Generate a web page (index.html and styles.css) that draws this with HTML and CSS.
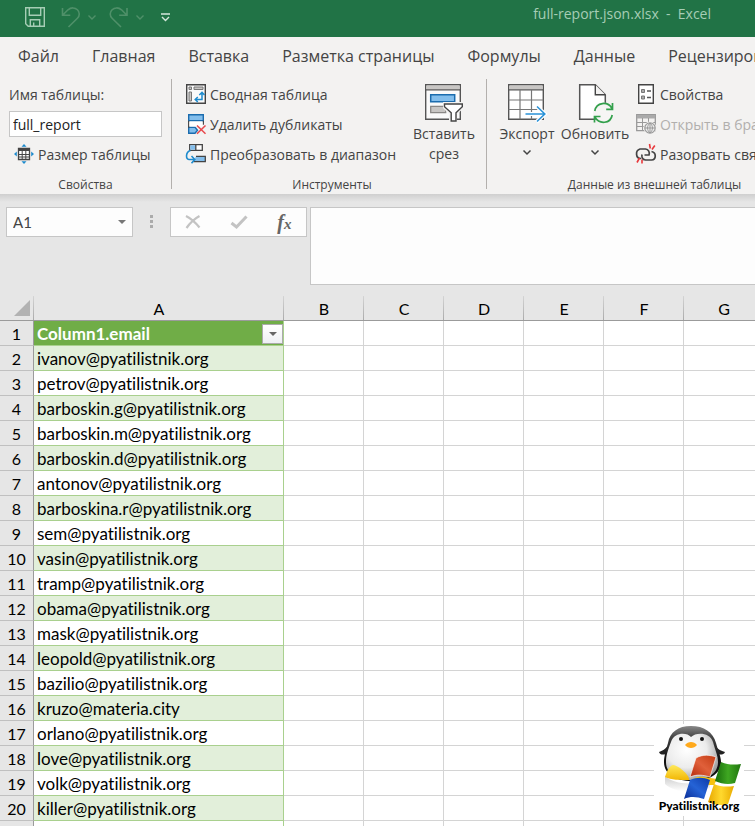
FILE: index.html
```html
<!DOCTYPE html>
<html lang="ru">
<head>
    <meta charset="UTF-8">
    <meta name="viewport" content="width=device-width, initial-scale=1.0">
    <title>full-report.json.xlsx - Excel</title>
    <link rel="stylesheet" href="styles.css">
</head>
<body>
    <header class="titlebar">
        <div class="quick-access">
            <button type="button" class="quick-btn" aria-label="Сохранить">
                <svg width="20" height="20" viewBox="0 0 20 20" fill="none" stroke="#a6cdb5" stroke-width="1.4"><path d="M.7.7h18.6v18.6H3.2L.7 16.8z"/><path d="M4.3.7v7.6h11.4V.7M5.3 19v-6.3h9.4V19M8.7 19v-3.4"/></svg>
            </button>
            <button type="button" class="quick-btn undo" aria-label="Отменить">
                <svg width="20" height="21" viewBox="0 0 20 21" fill="none" stroke="#4f9069" stroke-width="1.6"><path d="M1.5 1v7.2h7.8M1.8 8L7 2.8c3-2.6 7-2.4 9.4 0 2.5 2.4 2.5 6 0 8.5L7.5 20"/></svg>
            </button>
            <svg class="quick-arrow" width="8" height="5" viewBox="0 0 8 5" fill="none" stroke="#4f9069" stroke-width="1.4"><path d="M.5.5L4 4 7.5.5"/></svg>
            <button type="button" class="quick-btn redo" aria-label="Повторить">
                <svg width="20" height="21" viewBox="0 0 20 21" fill="none" stroke="#4f9069" stroke-width="1.6"><path d="M18 1v7.2h-7.8M17.7 8L12.5 2.8c-3-2.6-7-2.4-9.4 0-2.5 2.4-2.5 6 0 8.5L12 20"/></svg>
            </button>
            <svg class="quick-arrow" width="8" height="5" viewBox="0 0 8 5" fill="none" stroke="#4f9069" stroke-width="1.4"><path d="M.5.5L4 4 7.5.5"/></svg>
            <button type="button" class="quick-btn more" aria-label="Настройка панели быстрого доступа">
                <svg width="9" height="9" viewBox="0 0 9 9" fill="none" stroke="#d5e8dc" stroke-width="1.4"><path d="M0 1h9M1 4l3.5 3.5L8 4"/></svg>
            </button>
        </div>
        <div class="doc-title">full-report.json.xlsx&nbsp; -&nbsp; Excel</div>
    </header>

    <nav class="tabs">
        <a href="#" class="tab">Файл</a>
        <a href="#" class="tab">Главная</a>
        <a href="#" class="tab">Вставка</a>
        <a href="#" class="tab">Разметка страницы</a>
        <a href="#" class="tab">Формулы</a>
        <a href="#" class="tab">Данные</a>
        <a href="#" class="tab">Рецензирование</a>
    </nav>

    <div class="ribbon">
        <section class="group group-props">
            <div class="group-body">
                <div class="stack">
                    <label for="table-name" class="cmd-label">Имя таблицы:</label>
                    <input type="text" id="table-name" class="table-name" value="full_report">
                    <button type="button" class="cmd resize">
                        <svg width="20" height="20" viewBox="0 0 20 20"><path d="M4.5 4.5h11v11h-11z" fill="#fff" stroke="#444" stroke-width="1.3"/><path d="M4 4h12v3H4z" fill="#444"/><path d="M4.5 10.5h11M4.5 13h11M8.2 7v8.5M11.8 7v8.5" stroke="#444"/><path d="M10 0l2.5 2.8h-5zM10 20l2.5-2.8h-5zM0 10l2.8-2.5v5zM20 10l-2.8-2.5v5z" fill="#1e8bcd"/></svg>
                        Размер таблицы
                    </button>
                </div>
            </div>
            <div class="group-name">Свойства</div>
        </section>

        <section class="group group-tools">
            <div class="group-body">
                <div class="stack">
                    <button type="button" class="cmd">
                        <svg width="20" height="20" viewBox="0 0 20 20"><path d="M.7.7h18.6v18.6H.7z" fill="#fafafa" stroke="#444" stroke-width="1.4"/><path d="M3 3h2.5v2.5H3zM8 3h9v2.5H8zM3 8h2.5v9H3z" fill="#c8c6c4" stroke="#777"/><path d="M9.5 15.5h6.5V9M11.8 13l-2.6 2.5 2.6 2.5M13.3 11L16 8.3l2.5 2.7" fill="none" stroke="#1e8bcd" stroke-width="1.5"/></svg>
                        Сводная таблица
                    </button>
                    <button type="button" class="cmd">
                        <svg width="20" height="20" viewBox="0 0 20 20"><path d="M2.7.7h14.6v6H2.7zM2.7 13.3h6.3l2.5 3-2.5 3H2.7z" fill="#83beec" stroke="#1b6cae" stroke-width="1.4"/><path d="M2.7 6.7v7M17.3 6.7v4" stroke="#444" stroke-width="1.3"/><path d="M3.4 7.4h13.2v5.2H3.4z" fill="#fff"/><path d="M11 11.5l8.5 8.2M19.5 11.5L11 19.7" stroke="#e8484b" stroke-width="1.5"/></svg>
                        Удалить дубликаты
                    </button>
                    <button type="button" class="cmd">
                        <svg width="20" height="20" viewBox="0 0 20 20"><path d="M3.7.7h12.6v5.6H3.7z" fill="#fff" stroke="#444" stroke-width="1.3"/><path d="M4.3 1.3h5v4.4h-5z" fill="#83beec"/><path d="M9.8.7v5.6" stroke="#444" stroke-width="1.3"/><path d="M10 12.3h9.3v5.4H7.5" fill="#83beec" stroke="#444" stroke-width="1.3"/><path d="M4.5 6.5C-.5 8-.5 15 3 15.5h5.5M5.5 12l3.3 3.5-3.3 3.8" fill="none" stroke="#1e8bcd" stroke-width="1.6"/></svg>
                        Преобразовать в диапазон
                    </button>
                </div>
                <button type="button" class="big-cmd slicer">
                    <svg width="38" height="38" viewBox="0 0 38 38"><path d="M.7.7h34.6v34.6H.7z" fill="#fafafa" stroke="#555" stroke-width="1.4"/><path d="M1.4 1.4h33.2v4H1.4z" fill="#c8c6c4"/><path d="M.7 5.8h34.6" stroke="#555" stroke-width="1.3"/><path d="M5.7 10.7h24v7h-24z" fill="#83beec" stroke="#1b6cae" stroke-width="1.5"/><path d="M5.7 22.3h15v6.4h-15z" fill="#c8c6c4" stroke="#8a8886" stroke-width="1.3"/><path d="M18 18h21v6l-7 6v8h-8v-8l-6-6z" fill="#f3f2f1"/><path d="M19.5 20h17.8v2.8l-6.3 6V37h-4.8v-8.2l-6.7-6z" fill="#fff" stroke="#444" stroke-width="1.4"/></svg>
                    <span>Вставить<br>срез</span>
                </button>
            </div>
            <div class="group-name">Инструменты</div>
        </section>

        <section class="group group-data">
            <div class="group-body">
                <button type="button" class="big-cmd">
                    <svg width="38" height="38" viewBox="0 0 38 38"><path d="M.7.7h34.6v34.6H.7z" fill="#fff" stroke="#555" stroke-width="1.4"/><path d="M1.4 1.4h33.2v4H1.4z" fill="#c8c6c4"/><path d="M.7 5.8h34.6" stroke="#555" stroke-width="1.3"/><path d="M.7 16h34.6M.7 25.5h34.6M12 6v29.3M23.5 6v29.3" stroke="#777" stroke-width="1.2"/><path d="M17.5 30H37M28.5 22l8.3 8-8.3 8" fill="none" stroke="#fff" stroke-width="4"/><path d="M17.5 30H37M29 22.5l7.8 7.5-7.8 7.5" fill="none" stroke="#2b93d8" stroke-width="1.6"/></svg>
                    <span>Экспорт</span>
                    <svg class="chevron" width="8" height="5" viewBox="0 0 8 5" fill="none" stroke="#444" stroke-width="1.5"><path d="M.5.5L4 4 7.5.5"/></svg>
                </button>
                <button type="button" class="big-cmd">
                    <svg width="38" height="38" viewBox="0 0 38 38"><path d="M3.7.7h15.6l10 10v24.6H3.7z" fill="#fff" stroke="#555" stroke-width="1.5"/><path d="M19.3.7v10h10" fill="#f3f2f1" stroke="#444" stroke-width="1.4"/><circle cx="27.5" cy="29" r="10.5" fill="#f6f5f4"/><path d="M18.8 27c1.5-9 13-10 17.2-2.5M36.5 19v6.3h-6.3M36.2 31c-1.5 9-13 9.500-17.200 2.300M18.500 38.500v-6h6" fill="none" stroke="#33a04c" stroke-width="1.7"/></svg>
                    <span>Обновить</span>
                    <svg class="chevron" width="8" height="5" viewBox="0 0 8 5" fill="none" stroke="#444" stroke-width="1.5"><path d="M.5.5L4 4 7.5.5"/></svg>
                </button>
                <div class="stack stack-data">
                    <button type="button" class="cmd">
                        <svg width="20" height="20" viewBox="0 0 20 20"><path d="M2.7.7h14.6v18.6H2.7z" fill="#fff" stroke="#444" stroke-width="1.4"/><path d="M5.5 5.5h3v3h-3zM5.5 12h3v3h-3z" fill="#aaa" stroke="#777"/><path d="M11 7h4M11 13.5h4" stroke="#555" stroke-width="1.3"/></svg>
                        Свойства
                    </button>
                    <button type="button" class="cmd" disabled>
                        <svg width="20" height="20" viewBox="0 0 20 20"><path d="M.7.7h18.6v16H.7z" fill="#f3f2f1" stroke="#999" stroke-width="1.3"/><path d="M1 1h18v3.5H1z" fill="#aaa"/><path d="M1 8.5h18M1 12.5h9M6.5 4v12.5M12.5 4v5" stroke="#999"/><circle cx="14" cy="14" r="6.5" fill="#f3f2f1"/><circle cx="14" cy="14" r="5.2" fill="#eee" stroke="#999" stroke-width="1.2"/><path d="M9 14h10M14 9v10M14 9c-3.3 3-3.3 7 0 10M14 9c3.3 3 3.3 7 0 10" fill="none" stroke="#999"/></svg>
                        Открыть в браузере
                    </button>
                    <button type="button" class="cmd">
                        <svg width="20" height="20" viewBox="0 0 20 20" fill="none"><path d="M5 14.5C-.5 14.5-1 6.500 4 5h5.500c3 .5 4.500 3 3.500 6H8.500M15.500 7.500c5 1 5 8 0 8.500H9.500C6 15.500 5.500 13 6 10.500" stroke="#444" stroke-width="1.7"/><path d="M13.5 0l.8 4.5M18.8 1.5L16 5.5M1 18.5l2.5-4.5M6 19.5v-4" stroke="#e8383b" stroke-width="1.6"/></svg>
                        Разорвать связь
                    </button>
                </div>
            </div>
            <div class="group-name">Данные из внешней таблицы</div>
        </section>
    </div>

    <div class="formula-row">
        <div class="name-box">
            <input type="text" class="name-input" aria-label="Имя ячейки" value="A1">
            <button type="button" class="name-arrow" aria-label="Список имён">
                <svg width="8" height="4" viewBox="0 0 8 4"><path d="M0 0h8L4 4z" fill="#777"/></svg>
            </button>
        </div>
        <svg class="grip" width="3" height="13" viewBox="0 0 3 13"><path d="M0 0h3v3H0zM0 5h3v3H0zM0 10h3v3H0z" fill="#ababab"/></svg>
        <div class="formula-btns">
            <button type="button" aria-label="Отмена">
                <svg width="16" height="14" viewBox="0 0 16 14" fill="none" stroke="#c3c3c3" stroke-width="2.2"><path d="M1 1c5 2.5 9 6 13.5 11.5M14.5 1C9 4 5 8 1.5 13"/></svg>
            </button>
            <button type="button" aria-label="Ввод">
                <svg width="18" height="14" viewBox="0 0 18 14" fill="none" stroke="#c3c3c3" stroke-width="3"><path d="M1.5 8l5 4L16.5 1.5"/></svg>
            </button>
            <button type="button" class="fx" aria-label="Вставить функцию">f<span>x</span></button>
        </div>
        <textarea class="formula-input" aria-label="Строка формул"></textarea>
    </div>

    <main class="sheet">
        <table class="grid">
            <colgroup>
                <col class="col-num">
                <col class="col-a">
                <col class="col"><col class="col"><col class="col"><col class="col"><col class="col"><col class="col">
            </colgroup>
            <thead>
                <tr>
                    <th class="corner"><svg width="16" height="16" viewBox="0 0 16 16"><path d="M16 0v16H0z" fill="#b2b2b2"/></svg></th>
                    <th>A</th><th>B</th><th>C</th><th>D</th><th>E</th><th>F</th><th>G</th>
                </tr>
            </thead>
            <tbody id="rows"></tbody>
        </table>

        <div class="watermark">
            <svg width="90" height="82" viewBox="0 0 90 82">
                <defs>
                    <radialGradient id="belly" cx=".4" cy=".35" r=".7"><stop offset="0" stop-color="#fff"/><stop offset=".55" stop-color="#ececec"/><stop offset="1" stop-color="#999"/></radialGradient>
                    <linearGradient id="coat" x1="0" y1="0" x2="0" y2="1"><stop offset="0" stop-color="#888"/><stop offset=".2" stop-color="#444"/><stop offset=".6" stop-color="#111"/></linearGradient>
                    <linearGradient id="foot" x1="0" y1="0" x2="0" y2="1"><stop offset="0" stop-color="#ffe95a"/><stop offset="1" stop-color="#f2b705"/></linearGradient>
                    <linearGradient id="red" x1="0" y1="1" x2="1" y2="0"><stop offset="0" stop-color="#b52a0c"/><stop offset=".5" stop-color="#e0603a"/><stop offset="1" stop-color="#c23a12"/></linearGradient>
                    <linearGradient id="green" x1="0" y1="0" x2="1" y2="0"><stop offset="0" stop-color="#176b0b"/><stop offset=".5" stop-color="#3fa722"/><stop offset="1" stop-color="#21760f"/></linearGradient>
                    <linearGradient id="blue" x1="0" y1="1" x2="1" y2="0"><stop offset="0" stop-color="#0a2d96"/><stop offset=".5" stop-color="#2563d6"/><stop offset="1" stop-color="#0d3aa8"/></linearGradient>
                    <linearGradient id="gold" x1="0" y1="0" x2="1" y2="0"><stop offset="0" stop-color="#e8a800"/><stop offset=".5" stop-color="#ffd92e"/><stop offset="1" stop-color="#e9ab00"/></linearGradient>
                    <linearGradient id="shade" x1="0" y1="0" x2="0" y2="1"><stop offset="0" stop-color="#ccc"/><stop offset="1" stop-color="#fff"/></linearGradient>
                </defs>
                <path d="M11 52c8 8 28 10 45 4v8c-15 5-36 5-45-4z" fill="url(#shade)"/>
                <path d="M14 20c-1 4-4 6-9 8 1 3 4 3 7 2zM61 20c1 4 4 6 10 8-1 3-5 3-8 2z" fill="#222"/>
                <path d="M37 2C24 2 16 8 14 19c-2 8-4 13-4 19 0 12 11 19 28 19s29-7 29-19c0-6-3-11-5-19C59 8 50 2 37 2z" fill="url(#coat)"/>
                <path d="M37 13c-4-5-17-5-20 5-3 8-5 13-5 20 0 12 11 18 26 18s26-6 26-18c0-7-3-12-5-20-3-10-17-10-22-5z" fill="url(#belly)"/>
                <circle cx="27" cy="15" r="2" fill="#111"/><circle cx="48" cy="15" r="2" fill="#111"/>
                <path d="M31 21c3-4 9-4 12 0-3 4-9 4-12 0z" fill="#ffa91c"/>
                <path d="M19 41c-4 1-6 6-8 12 6 3 15 3 24 3 1-4-9-14-16-15z" fill="url(#foot)"/>
                <path d="M36 58c4-5 9-6 14-5l13 2-3 6H36z" fill="#f6c20f"/>
                <path d="M42 34c7-4 14-3 20-1l-6 20c-7-2-13-3-20 0z" fill="url(#red)" stroke="#fff" stroke-width=".6"/>
                <path d="M67 38c7 3 13 3 20 2l-6 19c-7 2-13 1-20-2z" fill="url(#green)"/>
                <path d="M36 56c7-3 13-3 20 0l-6 19c-7-2-13-3-20 0z" fill="url(#blue)"/>
                <path d="M60 60c7 3 13 3 20 2l-6 18c-7 2-13 1-20-2z" fill="url(#gold)"/>
            </svg>
            <div class="watermark-text">Pyatilistnik.org</div>
        </div>
    </main>

    <script src="script.js"></script>
</body>
</html>
```
FILE: styles.css
```css
* {
    box-sizing: border-box;
}

body {
    margin: 0;
    overflow: hidden;
    font-family: "Open Sans", "Noto Sans", sans-serif;
    font-size: 14px;
    color: #444;
    background-color: #e6e6e6;
}

button {
    padding: 0;
    border: 0;
    background: none;
    font: inherit;
    color: inherit;
}

button svg {
    display: block;
    flex: none;
    overflow: visible;
}

/* title bar */
.titlebar {
    display: flex;
    justify-content: space-between;
    height: 37px;
    padding: 0 44px 0 25px;
    background-color: #217346;
}

.quick-access {
    display: flex;
    align-items: center;
    height: 34px;
}

.undo {
    margin-left: 16px;
}

.redo {
    margin-left: 13px;
}

.quick-arrow {
    margin-left: 7px;
}

.more {
    margin-left: 17px;
}

.doc-title {
    line-height: 28px;
    color: #a6cdb5;
}

/* tabs */
.tabs {
    display: flex;
    gap: 33px;
    height: 38px;
    padding-left: 18px;
    overflow: hidden;
    background-color: #f3f2f1;
}

.tab {
    font-size: 16px;
    line-height: 38px;
    white-space: nowrap;
    color: #444;
    text-decoration: none;
}

/* ribbon */
.ribbon {
    display: flex;
    overflow: hidden;
    padding-top: 4px;
    height: 119px;
    background-color: #f3f2f1;
}

.group {
    flex: none;
    height: 110px;
    border-right: 1px solid #b3b0ad;
}

.group-props {
    width: 172px;
    padding: 0 9px;
}

.group-tools {
    width: 315px;
    padding: 0 8px 0 14px;
}

.group-data {
    width: 330px;
    padding-left: 6px;
}

.group-body {
    display: flex;
    height: 90px;
}

.group-name {
    margin-top: 6px;
    font-size: 12px;
    line-height: 20px;
    text-align: center;
}

.stack {
    display: flex;
    flex-direction: column;
}

.stack-data {
    margin-left: 7px;
}

.cmd,
.cmd-label {
    display: flex;
    align-items: center;
    gap: 4px;
    height: 30px;
    white-space: nowrap;
}

.cmd:disabled {
    color: #b1afad;
}

.resize {
    padding-left: 5px;
}

.table-name {
    width: 153px;
    height: 26px;
    margin: 2px 0;
    padding: 0 3px;
    border: 1px solid #c6c6c6;
    background-color: #fff;
    font: inherit;
    color: #222;
}

.big-cmd {
    display: flex;
    flex-direction: column;
    align-items: center;
    width: 68px;
    padding-top: 5px;
    line-height: 20px;
}

.big-cmd span {
    margin-top: 2px;
}

.slicer {
    margin-left: auto;
}

.chevron {
    margin-top: 6px;
}

/* formula bar */
.formula-row {
    display: flex;
    align-items: flex-start;
    height: 102px;
    padding-top: 13px;
    padding-left: 6px;
    background: linear-gradient(#cfcfcf, #e6e6e6 8px);
}

.name-box {
    display: flex;
    width: 127px;
    height: 30px;
    border: 1px solid #c6c6c6;
    background-color: #fdfdfd;
}

.name-input {
    flex: 1;
    min-width: 0;
    padding: 0 6px;
    border: 0;
    background: none;
    font: 15px Lato, sans-serif;
    color: #444;
}

.name-arrow {
    padding: 0 6px;
}

.grip {
    margin: 8px 17px;
}

.formula-btns {
    display: flex;
    align-items: center;
    justify-content: space-around;
    width: 137px;
    height: 30px;
    border: 1px solid #c6c6c6;
    background-color: #fdfdfd;
}

.fx {
    font: italic bold 20px "Liberation Serif", serif;
    color: #666;
}

.fx span {
    font-size: 15px;
}

.formula-input {
    flex: 1;
    height: 78px;
    margin-left: 3px;
    border: 1px solid #c6c6c6;
    border-right: 0;
    background-color: #fdfdfd;
    resize: none;
}

/* sheet */
.sheet {
    position: relative;
    height: calc(100vh - 296px);
    overflow: hidden;
    background-color: #fff;
}

.grid {
    width: 764px;
    table-layout: fixed;
    border-collapse: separate;
    border-spacing: 0;
    font-family: Lato, sans-serif;
    font-size: 16px;
    font-variant-ligatures: none;
    line-height: 22px;
    color: #000;
}

.col-num {
    width: 34px;
}

.col-a {
    width: 250px;
}

.col {
    width: 80px;
}

.grid th,
.grid td {
    height: 25px;
    padding: 2px 0 0;
    border-right: 1px solid #d4d4d4;
    border-bottom: 1px solid #d4d4d4;
    white-space: nowrap;
}

.grid th {
    font-weight: normal;
    background-color: #e6e6e6;
}

.grid thead th {
    border-right: 0;
    border-bottom-color: #9b9b9b;
    background: linear-gradient(#d4d4d4, #ababab) right / 1px 100% no-repeat #e6e6e6;
}

.grid tbody th {
    border-right-color: #9b9b9b;
    border-bottom-color: #c0c0c0;
}

.corner svg {
    display: block;
    margin: 2px 0 4px 14px;
}

.grid .cell-a {
    padding-left: 3px;
    border-color: #a9d08e;
    font-size: 17px;
}

.grid .band {
    background-color: #e2efda;
}

.grid .head {
    font-weight: bold;
    color: #fff;
    background-color: #70ad47;
}

.head-box {
    display: flex;
    justify-content: space-between;
    align-items: center;
    height: 22px;
}

.filter {
    display: flex;
    align-items: center;
    justify-content: center;
    width: 21px;
    height: 20px;
    border: 1px solid #ababab;
    background: linear-gradient(#fff, #eef0f4);
}

.watermark {
    position: absolute;
    right: 11px;
    bottom: 10px;
    width: 90px;
    height: 92px;
    background-color: #fff;
}

.watermark svg {
    display: block;
}

.watermark-text {
    position: absolute;
    bottom: 1px;
    width: 100%;
    font: 900 12px/18px Lato, sans-serif;
    font-variant-ligatures: none;
    text-align: center;
    color: #000;
}
```
FILE: script.js
```js
const emails = [
    'ivanov@pyatilistnik.org',
    'petrov@pyatilistnik.org',
    'barboskin.g@pyatilistnik.org',
    'barboskin.m@pyatilistnik.org',
    'barboskin.d@pyatilistnik.org',
    'antonov@pyatilistnik.org',
    'barboskina.r@pyatilistnik.org',
    'sem@pyatilistnik.org',
    'vasin@pyatilistnik.org',
    'tramp@pyatilistnik.org',
    'obama@pyatilistnik.org',
    'mask@pyatilistnik.org',
    'leopold@pyatilistnik.org',
    'bazilio@pyatilistnik.org',
    'kruzo@materia.city',
    'orlano@pyatilistnik.org',
    'love@pyatilistnik.org',
    'volk@pyatilistnik.org',
    'killer@pyatilistnik.org',
    ''
];

const emptyCells = '<td></td>'.repeat(6);

let html = `
    <tr>
        <th>1</th>
        <td class="cell-a head">
            <div class="head-box">
                Column1.email
                <button type="button" class="filter" aria-label="Фильтр">
                    <svg width="8" height="4" viewBox="0 0 8 4"><path d="M0 0h8L4 4z" fill="#666"/></svg>
                </button>
            </div>
        </td>
        ${emptyCells}
    </tr>`;

emails.forEach((email, index) => {
    // every second row of the table is shaded
    const band = index % 2 === 0 ? 'band' : '';
    html += `<tr><th>${index + 2}</th><td class="cell-a ${band}">${email}</td>${emptyCells}</tr>`;
});

document.getElementById('rows').innerHTML = html;
```
